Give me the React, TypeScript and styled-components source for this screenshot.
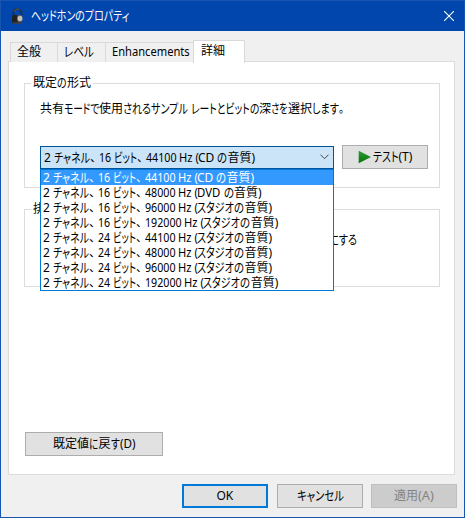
import React, { useLayoutEffect, useRef, useState } from "react";
import styled, { createGlobalStyle } from "styled-components";

const GlobalStyle = createGlobalStyle`
  * {
    box-sizing: border-box;
  }
  body {
    margin: 0;
    overflow: hidden;
  }
`;

const Dialog = styled.div`
  width: 465px;
  height: 518px;
  display: flex;
  flex-direction: column;
  border: 1px solid #1855ae;
  background: #f0f0f0;
  color: #000;
  font-family: "Noto Sans", "Noto Sans CJK JP", sans-serif;
  font-size: 12px;
  line-height: 15px;
`;

const TitleBar = styled.header`
  flex: 0 0 30px;
  display: flex;
  align-items: center;
  padding: 0 10px 1px 9px;
  background: #0046ad;
  color: #fff;
`;

const Caption = styled.div`
  flex: 1;
  padding-left: 5px;
`;

const CloseButton = styled.button`
  display: flex;
  padding: 0;
  border: 0;
  background: none;
`;

const Tabs = styled.nav`
  display: flex;
  align-items: flex-end;
  height: 31px;
  padding-left: 9px;
`;

const Tab = styled.div<{ $width: number; $active?: boolean }>`
  width: ${(p) => p.$width}px;
  height: ${(p) => (p.$active ? 23 : 20)}px;
  margin-bottom: ${(p) => (p.$active ? -1 : 0)}px;
  padding: ${(p) => (p.$active ? "2px 0 0 7px" : "1px 0 0 6px")};
  border: 1px solid #d9d9d9;
  border-bottom: 0;
  border-right-width: ${(p) => (p.$active ? 1 : 0)}px;
  background: ${(p) => (p.$active ? "#fff" : "#f0f0f0")};
  z-index: 1;
`;

const Panel = styled.main`
  height: 414px;
  margin: -1px 9px 0 7px;
  padding: 21px 14px 0 15px;
  border: 1px solid #dcdcdc;
  background: #fff;
`;

const Group = styled.section<{ $height: number }>`
  height: ${(p) => p.$height}px;
  margin-bottom: 21px;
  padding: 0 11px 0 15px;
  border: 1px solid #dcdcdc;
`;

const Legend = styled.div`
  width: fit-content;
  margin: -9px 0 0 -9px;
  padding: 0 2px;
  background: #fff;
`;

const Description = styled.p<{ $top: number; $left?: number }>`
  margin: ${(p) => p.$top}px 0 0 ${(p) => p.$left || 0}px;
`;

const FormatRow = styled.div`
  display: flex;
  justify-content: space-between;
  align-items: flex-start;
  margin-top: 29px;
`;

const Combo = styled.div`
  position: relative;
  width: 294px;
  margin-top: 1px;
`;

const ComboValue = styled.div`
  display: flex;
  align-items: center;
  justify-content: space-between;
  height: 23px;
  padding: 0 4px 1px 3px;
  border: 1px solid #005499;
  background: #cce4f7;
`;

const Menu = styled.ul`
  position: absolute;
  top: 23px;
  left: 0;
  z-index: 2;
  width: 294px;
  margin: 0;
  padding: 0;
  border: 1px solid #0078d7;
  background: #fff;
  list-style: none;
`;

const Option = styled.li<{ $selected: boolean }>`
  height: 15px;
  padding-left: 2px;
  background: ${(p) => (p.$selected ? "#3399ff" : "#fff")};
  color: ${(p) => (p.$selected ? "#fff" : "#000")};
`;

const Button = styled.button<{ $width?: number; $primary?: boolean }>`
  display: flex;
  align-items: center;
  justify-content: center;
  width: ${(p) => p.$width || 86}px;
  height: 24px;
  padding: 0 0 1px;
  border: ${(p) => (p.$primary ? "2px solid #0078d7" : "1px solid #adadad")};
  background: #e1e1e1;
  color: #000;
  font: inherit;
  &:disabled {
    border-color: #bfbfbf;
    background: #ccc;
    color: #838383;
  }
`;

const Restore = styled.div`
  padding: 124px 0 0 1px;
`;

const Footer = styled.footer`
  display: flex;
  justify-content: flex-end;
  gap: 8px;
  padding: 9px 7px 0 0;
  ${Button}:first-child {
    margin-right: 1px;
  }
`;

const Line = styled.span`
  display: flex;
  white-space: pre;
`;

const RunBox = styled.span`
  flex: none;
  display: block;
  height: 15px;
`;

const RunText = styled.span<{ $kana: boolean }>`
  display: block;
  width: max-content;
  white-space: pre;
  font-size: ${(p) => (p.$kana ? 13 : 12)}px;
  transform-origin: 0 50%;
  font-feature-settings: "palt";
`;

const Run: React.FC<{ text: string; width: number }> = ({ text, width }) => {
  const ref = useRef<HTMLSpanElement>(null);
  const [scale, setScale] = useState(1);
  useLayoutEffect(() => {
    if (ref.current) setScale(width / ref.current.offsetWidth);
  }, [text, width]);
  return (
    <RunBox style={{ width }}>
      <RunText
        ref={ref}
        $kana={/[ぁ-ヿ]/.test(text)}
        style={{ transform: `scaleX(${scale})` }}
      >
        {text}
      </RunText>
    </RunBox>
  );
};

type Piece = [string, number];

const Label: React.FC<{ pieces: Piece[] }> = ({ pieces }) => (
  <Line>
    {pieces.map(([text, width], i) => (
      <Run key={i} text={text} width={width} />
    ))}
  </Line>
);

interface Format {
  bits: string;
  rate: string;
  quality?: string;
}

const formats: Format[] = [
  { bits: "16", rate: "44100", quality: "CD" },
  { bits: "16", rate: "48000", quality: "DVD" },
  { bits: "16", rate: "96000" },
  { bits: "16", rate: "192000" },
  { bits: "24", rate: "44100" },
  { bits: "24", rate: "48000" },
  { bits: "24", rate: "96000" },
  { bits: "24", rate: "192000" },
];

const qualityPieces = (quality?: string): Piece[] => {
  if (quality === "CD") return [["CD ", 19]];
  if (quality === "DVD") return [["DVD ", 26.5]];
  return [["スタジオ", 37]];
};

const FormatLabel: React.FC<{ format: Format }> = ({ format }) => (
  <Label
    pieces={[
      ["2 ", 10],
      ["チャネル", 36],
      ["、 ", 9],
      [format.bits + " ", 15],
      ["ビット", 23],
      ["、 ", 8.5],
      [format.rate + " ", format.rate.length * 6.2 + 2],
      ["Hz (", 19.5],
      ...qualityPieces(format.quality),
      ["の", 10.5],
      ["音質", 24],
      [")", 4],
    ]}
  />
);

const HeadphonesIcon = () => (
  <svg width="16" height="18" viewBox="0 0 16 18">
    <path
      d="M3.5 9C2 1 11-1 12 8"
      fill="none"
      stroke="#2b2b2d"
      strokeWidth="1.6"
    />
    <path d="M4.5 5c1-3.4 4-3.6 5.2-1.8" fill="none" stroke="#77787a" strokeWidth=".7" />
    <rect x="2" y="8" width="6" height="8.5" rx="2" fill="#222" />
    <rect x="7" y="8" width="5.5" height="7" rx="2" fill="#55524d" />
    <ellipse cx="10" cy="11.5" rx="2.4" ry="2.8" fill="#c4c2bb" />
    <path d="M3 16h8" stroke="#46413a" strokeWidth="1.6" />
  </svg>
);

const PlayIcon = () => (
  <svg width="15" height="14" viewBox="0 0 15 14">
    <defs>
      <linearGradient id="play" x1="0" y1="0" x2="0" y2="1">
        <stop offset="0" stopColor="#2f9e35" />
        <stop offset="1" stopColor="#04700b" />
      </linearGradient>
    </defs>
    <path d="M.7.8v12.4L13 7z" fill="url(#play)" />
  </svg>
);

const App: React.FC = () => {
  return (
    <>
      <GlobalStyle />
      <Dialog>
        <TitleBar>
          <HeadphonesIcon />
          <Caption>
            <Label pieces={[["ヘッドホンのプロパティ", 98]]} />
          </Caption>
          <CloseButton aria-label="閉じる">
            <svg width="10" height="10" viewBox="0 0 10 10">
              <path d="M0 0L10 10M10 0L0 10" stroke="#fff" strokeWidth="1.1" />
            </svg>
          </CloseButton>
        </TitleBar>
        <Tabs>
          <Tab $width={47}>
            <Label pieces={[["全般", 24]]} />
          </Tab>
          <Tab $width={48}>
            <Label pieces={[["レベル", 30]]} />
          </Tab>
          <Tab $width={88}>
            <Label pieces={[["Enhancements", 78]]} />
          </Tab>
          <Tab $width={52} $active>
            <Label pieces={[["詳細", 24]]} />
          </Tab>
        </Tabs>
        <Panel>
          <Group $height={105}>
            <Legend>
              <Label
                pieces={[
                  ["既定", 24],
                  ["の", 10],
                  ["形式", 24],
                ]}
              />
            </Legend>
            <Description $top={11}>
              <Label
                pieces={[
                  ["共有", 24],
                  ["モードで", 35],
                  ["使用", 24],
                  ["されるサンプル", 65],
                  [" ", 3],
                  ["レートとビットの", 68],
                  ["深", 12],
                  ["さを", 17],
                  ["選択", 24],
                  ["します", 27],
                  ["。", 5],
                ]}
              />
            </Description>
            <FormatRow>
              <Combo>
                <ComboValue>
                  <FormatLabel format={formats[0]} />
                  <svg width="9" height="6" viewBox="0 0 9 6">
                    <path d="M.5.7l4 4 4-4" fill="none" stroke="#444" />
                  </svg>
                </ComboValue>
                <Menu>
                  {formats.map((format, i) => (
                    <Option key={i} $selected={i === 0}>
                      <FormatLabel format={format} />
                    </Option>
                  ))}
                </Menu>
              </Combo>
              <Button>
                <PlayIcon />
                <Label
                  pieces={[
                    ["テスト", 26],
                    ["(T)", 14],
                  ]}
                />
              </Button>
            </FormatRow>
          </Group>
          <Group $height={78}>
            <Legend>
              <Label pieces={[["排", 12]]} />
            </Legend>
            <Description $top={16} $left={289}>
              <Label pieces={[["にする", 28]]} />
            </Description>
          </Group>
          <Restore>
            <Button $width={138}>
              <Label
                pieces={[
                  ["既定値", 36],
                  ["に", 9.5],
                  ["戻", 12],
                  ["す", 9],
                  ["(D)", 15.5],
                ]}
              />
            </Button>
          </Restore>
        </Panel>
        <Footer>
          <Button $primary>
            <Label pieces={[["OK", 17]]} />
          </Button>
          <Button>
            <Label pieces={[["キャンセル", 47]]} />
          </Button>
          <Button disabled>
            <Label
              pieces={[
                ["適用", 24],
                ["(A)", 16],
              ]}
            />
          </Button>
        </Footer>
      </Dialog>
    </>
  );
};

export default App;
